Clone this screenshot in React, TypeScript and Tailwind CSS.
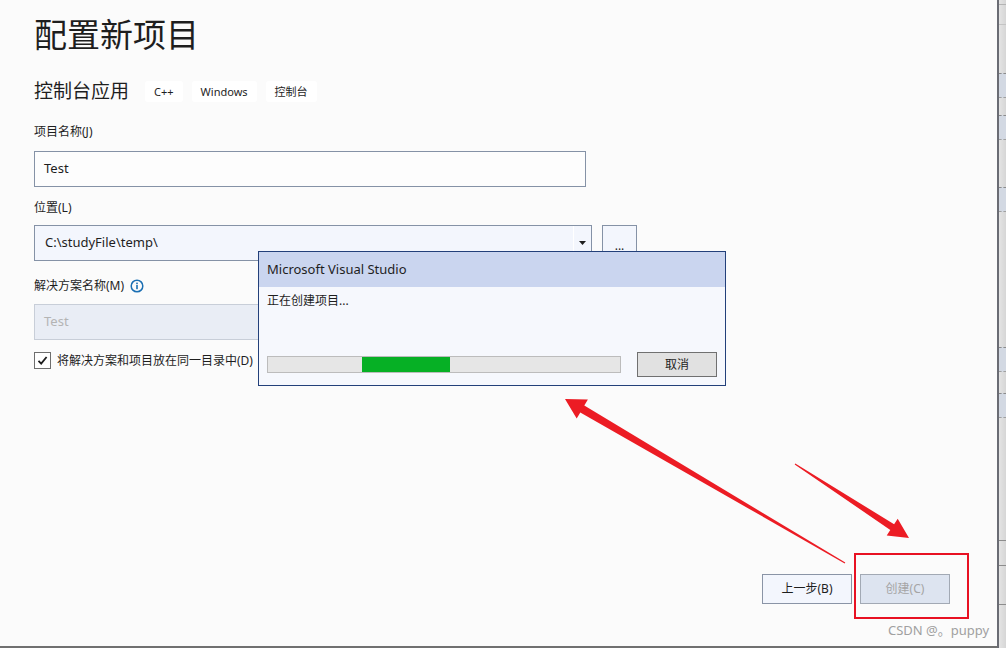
const tags = ["C++", "Windows", "控制台"]

function InfoIcon() {
    return (
        <svg width="14" height="14" viewBox="0 0 14 14" className="ml-[6px]">
            <circle cx="7" cy="7" r="5.8" fill="none" stroke="#1b6fb3" strokeWidth="1.5" />
            <rect x="6.2" y="6" width="1.6" height="4.2" fill="#1b6fb3" />
            <rect x="6.2" y="3.6" width="1.6" height="1.6" fill="#1b6fb3" />
        </svg>
    )
}

function Arrows() {
    return (
        <svg width="1006" height="648" className="pointer-events-none absolute left-0 top-0">
            <polygon
                fill="#ec1c24"
                points="845.3,562.6 584.3,405.6 587.9,399.6 565,399 576.7,418.6 580.3,412.6 844.7,563.4"
            />
            <polygon
                fill="#ec1c24"
                points="795.3,463.6 894.1,524.2 897.7,518.7 909,538 886.7,535.5 890.3,530 794.7,464.4"
            />
        </svg>
    )
}

function Block() {
    return <div className="h-[25px] border-t border-b border-t-[#8c8c8c] border-b-[#a0a0a0] border-dashed bg-[#d3d9e3]" />
}

export default function App() {
    return (
        <div className="relative flex h-[648px] w-[1006px] overflow-hidden bg-[#fbfbfb] font-['Noto_Sans','Noto_Sans_CJK_SC',sans-serif] text-[#1e1e1e]">
            <div className="flex h-[648px] w-[997px] flex-col border-b-2 border-[#707070] pl-[34px]">
                <h1 className="mt-[13px] text-[33px] leading-[44px] font-normal">配置新项目</h1>

                <div className="mt-[24px] flex h-[21px] items-center">
                    <span className="text-[19px] leading-none">控制台应用</span>
                    <div className="ml-[16px] flex gap-[9px]">
                        {tags.map((t) => (
                            <span key={t} className="h-[21px] rounded-[3px] bg-white px-[9px] text-[11px] leading-[21px]">
                                {t}
                            </span>
                        ))}
                    </div>
                </div>

                <div className="mt-[22px] text-[12px] leading-[16px]">项目名称(J)</div>
                <div className="mt-[11px] flex h-[36px] w-[552px] items-center border border-[#8592a6] bg-[#fdfdfd] pl-[9px] text-[13px]">
                    Test
                </div>

                <div className="mt-[13px] text-[12px] leading-[16px]">位置(L)</div>
                <div className="mt-[9px] flex h-[36px]">
                    <div className="flex w-[558px] items-center border border-[#8592a6] bg-[#f3f6fd]">
                        <span className="flex-1 pl-[10px] text-[13px]">C:\studyFile\temp\</span>
                        <div className="flex h-full w-[18px] items-center justify-center border-l border-white">
                            <svg width="7" height="4" viewBox="0 0 7 4">
                                <polygon points="0,0 7,0 3.5,4" fill="#1e1e1e" />
                            </svg>
                        </div>
                    </div>
                    <div className="ml-[10px] flex w-[35px] items-end justify-center border border-[#8592a6] bg-[#f3f6fd] pb-[8px] text-[12px] leading-none">
                        ...
                    </div>
                </div>

                <div className="mt-[17px] flex items-center text-[12px] leading-[16px]">
                    解决方案名称(M)
                    <InfoIcon />
                </div>
                <div className="mt-[10px] flex h-[36px] w-[552px] items-center border border-[#c8ced8] bg-[#e9edf5] pl-[9px] text-[13px] text-[#b4b4b4]">
                    Test
                </div>

                <div className="mt-[12px] flex h-[17px] items-center text-[12px]">
                    <div className="flex h-[17px] w-[17px] items-center justify-center border border-[#6e6e6e] bg-white">
                        <svg width="11" height="11" viewBox="0 0 11 11">
                            <polyline points="1.5,5.8 4.2,8.6 9.6,2" fill="none" stroke="#1e1e1e" strokeWidth="1.8" />
                        </svg>
                    </div>
                    <span className="ml-[6px]">将解决方案和项目放在同一目录中(D)</span>
                </div>

                <div className="flex-1" />

                <div className="mb-[42px] flex justify-end gap-[8px] pr-[47px] text-[12px]">
                    <button className="h-[30px] w-[90px] border border-[#8a94a6] bg-[#f3f6fd]">上一步(B)</button>
                    <button className="h-[30px] w-[90px] border border-[#a2a9b4] bg-[#dde4f0] text-[#a5a5a5]">创建(C)</button>
                </div>
            </div>

            <div className="h-full w-[2px] bg-[#6a6c74]" />
            <div className="flex flex-1 flex-col bg-gradient-to-r from-[#e4e4e4] to-[#d6d6d6]">
                <div className="h-[4px]" />
                <div className="h-px bg-[#b4b4b4]" />
                <div className="h-[19px]" />
                <div className="h-px bg-[#c4c4c4]" />
                <div className="h-[48px]" />
                <Block />
                <div className="h-[17px]" />
                <Block />
                <div className="h-[47px]" />
                <Block />
                <div className="h-[135px]" />
                <Block />
                <div className="h-[21px]" />
                <Block />
                <div className="h-[122px]" />
                <div className="h-px bg-[#8c8c8c]" />
                <div className="h-[24px]" />
                <div className="h-px bg-[#8c8c8c]" />
                <div className="h-[38px]" />
                <div className="h-px bg-[#8c8c8c]" />
            </div>

            <div className="absolute left-[258px] top-[251px] flex h-[135px] w-[468px] flex-col border border-[#23407a] bg-[#f6f8fd]">
                <div className="flex h-[35px] items-center bg-[#cad5ef] pl-[8px] text-[13px]">Microsoft Visual Studio</div>
                <div className="mt-[6px] pl-[8px] text-[12px] leading-[16px]">正在创建项目...</div>
                <div className="mt-[43px] flex items-center pl-[8px]">
                    <div className="h-[17px] w-[354px] border border-[#bcbcbc] bg-[#e6e6e6] pl-[94px]">
                        <div className="h-full w-[88px] bg-[#06b025]" />
                    </div>
                    <button className="ml-[16px] h-[25px] w-[80px] border border-[#707070] bg-[#e1e1e1] text-[12px]">取消</button>
                </div>
            </div>

            <Arrows />

            <div className="pointer-events-none absolute left-[854px] top-[553px] h-[66px] w-[115px] border-2 border-[#e81123]" />
            <div className="absolute left-[888px] top-[621px] text-[13px] text-[#a0a0a0]">CSDN @。puppy</div>
        </div>
    )
}
